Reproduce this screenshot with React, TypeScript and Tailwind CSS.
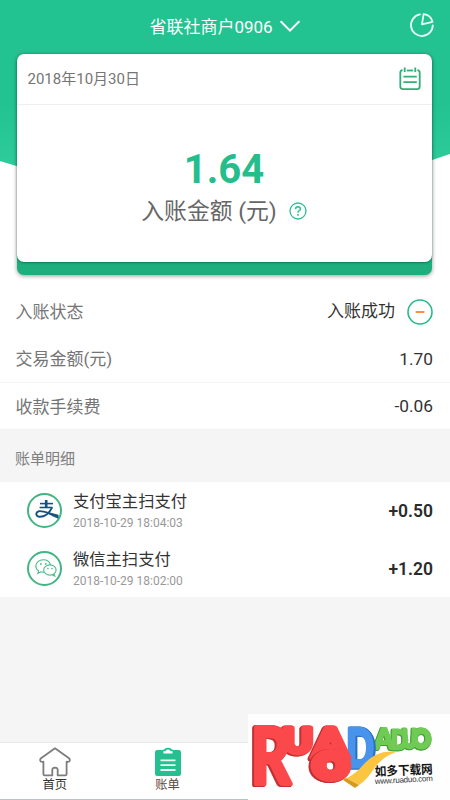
type SummaryRow = {
  label: string
  value: string
}

type BillEntry = {
  channel: 'alipay' | 'wechat'
  title: string
  time: string
  amount: string
}

const summaryRows: SummaryRow[] = [
  { label: '交易金额(元)', value: '1.70' },
  { label: '收款手续费', value: '-0.06' },
]

const bills: BillEntry[] = [
  { channel: 'alipay', title: '支付宝主扫支付', time: '2018-10-29 18:04:03', amount: '+0.50' },
  { channel: 'wechat', title: '微信主扫支付', time: '2018-10-29 18:02:00', amount: '+1.20' },
]

function PieIcon() {
  return (
    <svg width="25" height="25" viewBox="0 0 25 25" fill="none" stroke="#e9fff6" strokeWidth="1.8">
      <path d="M11 1.4A10.9 10.9 0 1 0 23.8 12.3" strokeLinecap="round" />
      <path d="M14.6 1.2L13 11.3L23.6 8.8A10.6 10.6 0 0 0 14.6 1.2Z" strokeLinejoin="round" />
    </svg>
  )
}

function CalendarIcon() {
  return (
    <svg width="22" height="24" viewBox="0 0 22 24" fill="none" stroke="#35ad76" strokeWidth="1.8">
      <path d="M3.6 3.2Q1.3 3.5 1.3 5.8V19.6Q1.3 22.1 3.8 22.1H18.2Q20.7 22.1 20.7 19.6V5.8Q20.7 3.5 18.4 3.2" />
      <path d="M7.8 3.5H14.2" />
      <path d="M5.7 0.6V5M16.3 0.6V5" />
      <path d="M4.4 9.7H17.8M4.4 15.2H17.8" />
    </svg>
  )
}

function HelpIcon() {
  return (
    <svg width="18" height="18" viewBox="0 0 18 18" fill="none" stroke="#2fc193" strokeWidth="1.3">
      <circle cx="9" cy="9" r="8" />
      <path d="M6.5 7.1Q6.6 4.7 9 4.7Q11.4 4.8 11.4 7Q11.3 8.2 10 8.9Q9 9.5 9 10.8" strokeWidth="1.5" />
      <path d="M9 12.1V13.7" strokeWidth="1.6" />
    </svg>
  )
}

function AlipayMark() {
  return (
    <svg className="ml-1 shrink-0" width="26" height="22" viewBox="0 0 26 22" fill="none" stroke="#14527f">
      <path d="M6 4.6H19" strokeWidth="1.6" />
      <path d="M12.2 1V8.4" strokeWidth="2.6" />
      <path d="M5.6 8.5H18.6" strokeWidth="1.6" />
      <path
        d="M18 8.6C15.6 13.6 11 17.8 5.8 17.8C1.6 17.4 1.2 13.5 4.6 12.3C9 11.3 15 14.8 22 16.6"
        strokeWidth="1.9"
      />
      <path d="M12.5 13.2L24.2 16V19.2Q19 17.8 12.5 13.2Z" fill="#14527f" strokeWidth="0.6" />
    </svg>
  )
}

function WechatMark() {
  return (
    <svg className="ml-0.5 shrink-0" width="22" height="19" viewBox="0 0 22 19" fill="none" stroke="#4db98a" strokeWidth="1.1">
      <path d="M15.6 6.2C14.8 2.8 11.9 0.8 8.3 0.8C4.1 0.8 0.8 3.5 0.8 6.9C0.8 9 1.9 10.7 3.6 11.8L2.8 14.3L5.8 12.8Q7.3 13.2 8.9 13.1" />
      <ellipse cx="14.9" cy="11" rx="6.2" ry="5.1" />
      <path d="M17.2 15.8L19.8 17.2L19 14.9" />
      <g fill="#4db98a" stroke="none">
        <circle cx="5.9" cy="4.9" r="0.9" />
        <circle cx="10.8" cy="4.9" r="0.9" />
        <circle cx="12.9" cy="9.6" r="0.8" />
        <circle cx="17" cy="9.6" r="0.8" />
      </g>
    </svg>
  )
}

function HomeIcon() {
  return (
    <svg width="32" height="30" viewBox="0 0 32 30" fill="none" stroke="#7d7d7d" strokeWidth="1.8" strokeLinejoin="round">
      <path d="M16 1.3L2 11.2Q1 12 1.2 13.6Q1.6 15.2 4.4 14.7V27.1Q4.4 28.4 5.7 28.4H13.3V22.8Q13.4 20.8 16 20.7Q18.6 20.8 18.7 22.8V28.4H26.3Q27.6 28.4 27.6 27.1V14.7Q30.4 15.2 30.8 13.6Q31 12 30 11.2L16 1.3Z" />
    </svg>
  )
}

function ClipboardIcon() {
  return (
    <svg width="28" height="30" viewBox="0 0 28 30">
      <rect x="1" y="3" width="26" height="26" rx="2.2" fill="#25c08f" />
      <path d="M8 7.4V4.2Q8 2.4 10 2.4Q11 0.8 14 0.8Q17 0.8 18 2.4Q20 2.4 20 4.2V7.4Z" fill="#25c08f" />
      <path d="M9.4 6.4V4.2H11.4Q12 2.4 14 2.4Q16 2.4 16.6 4.2H18.6V6.4Z" fill="#fff" />
      <path d="M6.5 13.4H21.5M6.5 18.2H21.5M6.5 23H21.5" stroke="#e9fff5" strokeWidth="1.8" />
    </svg>
  )
}

function SiteBadge() {
  return (
    <svg
      width="202"
      height="86"
      viewBox="0 0 202 86"
      fontFamily="Lato, sans-serif"
      fontWeight="900"
      strokeLinejoin="round"
    >
      <g className="[filter:drop-shadow(-1px_0_0_#3f9e38)_drop-shadow(0_1px_0_#3f9e38)]" fill="#6fcb54" stroke="#6fcb54">
        <text x="164" y="34" fontSize="26" strokeWidth="3" textLength="19" lengthAdjust="spacingAndGlyphs">O</text>
        <text x="154" y="34" fontSize="26" strokeWidth="2.4" textLength="15" lengthAdjust="spacingAndGlyphs">U</text>
        <text x="143" y="35" fontSize="27" strokeWidth="2.4" textLength="17" lengthAdjust="spacingAndGlyphs">D</text>
        <text x="126" y="35" fontSize="28" strokeWidth="2" textLength="20" lengthAdjust="spacingAndGlyphs">A</text>
      </g>
      <g className="[filter:drop-shadow(1px_0_0_#2c6fc0)_drop-shadow(1px_1px_0_#2c6fc0)]" fill="#4894ec" stroke="#4894ec">
        <text x="98" y="53" fontSize="53" strokeWidth="3" textLength="28" lengthAdjust="spacingAndGlyphs">D</text>
      </g>
      <path d="M80 69Q101 68 116 50Q130 35 148 38Q136 42 127 53Q119 66 111 71L98 64Q90 68 80 69Z" fill="#fcc540" />
      <path d="M98 64L111 71L107 74L95 66Z" fill="#d69a22" />
      <g className="[filter:drop-shadow(-1px_1px_0_#c22f33)_drop-shadow(-1px_0_0_#c22f33)]" fill="#fa484b" stroke="#fa484b">
        <text x="35" y="39" fontSize="34" strokeWidth="5" textLength="30" lengthAdjust="spacingAndGlyphs">U</text>
        <text x="65" y="44" fontSize="41" strokeWidth="5" textLength="35" lengthAdjust="spacingAndGlyphs">A</text>
      </g>
      <g className="[filter:drop-shadow(-1px_1px_0_#c22f33)_drop-shadow(-1px_0_0_#c22f33)]" fill="#fa484b" stroke="#fa484b">
        <text x="66" y="64" fontSize="34" strokeWidth="8" textLength="34" lengthAdjust="spacingAndGlyphs">O</text>
        <text x="3" y="70" fontSize="79" strokeWidth="4" textLength="40" lengthAdjust="spacingAndGlyphs">R</text>
      </g>
      <text
        transform="translate(127 62) rotate(-2.5)"
        fontFamily="'Noto Sans CJK SC', sans-serif"
        fontSize="12.5"
        fontWeight="700"
        textLength="58"
        lengthAdjust="spacingAndGlyphs"
        fill="#151515"
      >
        如多下载网
      </text>
      <text
        transform="translate(127 70) rotate(-3)"
        fontFamily="'Liberation Sans', sans-serif"
        fontSize="8"
        fontWeight="400"
        textLength="58"
        fill="#333"
      >
        www.ruaduo.com
      </text>
    </svg>
  )
}

export default function App() {
  return (
    <div className="relative flex h-[800px] w-[450px] flex-col overflow-hidden bg-[#f5f5f5] font-[Roboto,'Noto_Sans_CJK_SC',sans-serif] text-[#333]">
      <section className="relative h-[288px] shrink-0 bg-white">
        <div className="absolute inset-x-0 top-0 h-[230px] bg-linear-to-b from-[#22c391] from-45% to-[#2ccb98] to-70% [clip-path:polygon(0_0,100%_0,100%_154px,50%_230px,0_161px)]" />
        <div className="relative flex h-full flex-col">
          <header className="grid h-[54px] shrink-0 grid-cols-[1fr_auto_1fr] items-center px-4 text-white">
            <span />
            <h1 className="flex items-center gap-[7px] pr-px text-[17px] leading-none">
              <span>省联社商户0906</span>
              <svg width="20" height="15" viewBox="0 0 20 15" fill="none" stroke="#fff" strokeWidth="2">
                <path d="M1.2 1.8L10 10.6L18.8 1.8" strokeLinecap="round" />
              </svg>
            </h1>
            <button className="justify-self-end pb-1">
              <PieIcon />
            </button>
          </header>

          <div className="mr-[18.5px] ml-[16.5px] h-[221px] shrink-0 rounded-[7px] bg-[#1eae7e] shadow-[0_1px_4px_rgba(0,0,0,0.4)]">
            <div className="flex h-[207.5px] flex-col rounded-[7px] bg-white shadow-[0_1px_2px_rgba(0,70,45,0.5)]">
              <div className="flex h-[51px] items-center justify-between border-b border-[#eeeeee] px-[11px] text-[15px] text-[#757575]">
                <span>2018年10月30日</span>
                <CalendarIcon />
              </div>
              <div className="flex flex-1 flex-col items-center pt-[43px]">
                <div className="text-[40px] leading-[44px] font-bold text-[#25bd8b]">1.64</div>
                <div className="mt-1 flex items-center gap-3 text-[22.8px] leading-[30px] text-[#666]">
                  <span className="pt-px">入账金额 (元)</span>
                  <span className="pb-0.5">
                    <HelpIcon />
                  </span>
                </div>
              </div>
            </div>
          </div>
        </div>
      </section>

      <section className="flex h-[142px] shrink-0 flex-col bg-white text-[17px]">
        <div className="flex h-[47px] items-center justify-between pr-[17px] pl-[15.5px]">
          <span className="pt-0.5 text-[#757575]">入账状态</span>
          <div className="flex items-center gap-3">
            <span>入账成功</span>
            <svg width="26" height="26" viewBox="0 0 26 26" fill="none">
              <circle cx="13" cy="13" r="12" stroke="#26ba87" strokeWidth="1.6" />
              <path d="M8.6 13H17.4" stroke="#ff8a3c" strokeWidth="1.9" />
            </svg>
          </div>
        </div>
        {summaryRows.map((row) => (
          <div
            key={row.label}
            className="flex h-[47.5px] items-center justify-between border-b border-[#f3f3f3] pt-[3px] pr-[17px] pl-[15.5px]"
          >
            <span className="text-[#757575]">{row.label}</span>
            <span className="text-[17.3px]">{row.value}</span>
          </div>
        ))}
      </section>

      <h2 className="flex h-[52px] shrink-0 items-center px-[15px] pt-1.5 text-[15px] text-[#808080]">账单明细</h2>

      <ul className="h-[115px] shrink-0 bg-white">
        {bills.map((bill) => (
          <li key={bill.time} className="flex h-[58px] items-center pr-[17px] pl-[27px]">
            <div className="mb-0.5 flex size-[35px] items-center justify-center rounded-full border-2 border-[#42b583]">
              {bill.channel === 'alipay' ? <AlipayMark /> : <WechatMark />}
            </div>
            <div className="ml-[11px] flex-1">
              <div className="text-[16.3px] leading-[22px]">{bill.title}</div>
              <div className="pt-px text-[12px] leading-[18px] text-[#999]">{bill.time}</div>
            </div>
            <div className="text-[17.5px] font-semibold text-[#2b2b2b]">{bill.amount}</div>
          </li>
        ))}
      </ul>

      <nav className="mt-auto grid h-[58px] grid-cols-4 border-t border-b border-t-[#e9e9e9] border-b-[#b5bfe0] bg-white pr-[3px] text-[12.3px] leading-[17px]">
        <a className="flex flex-col items-center pt-1 pr-0.5">
          <HomeIcon />
          <span>首页</span>
        </a>
        <a className="flex flex-col items-center pt-1">
          <ClipboardIcon />
          <span className="text-[#5b4a40]">账单</span>
        </a>
      </nav>

      <div className="absolute right-0 bottom-0 h-[86px] w-[202px] bg-[#fefefe]">
        <SiteBadge />
      </div>
    </div>
  )
}
